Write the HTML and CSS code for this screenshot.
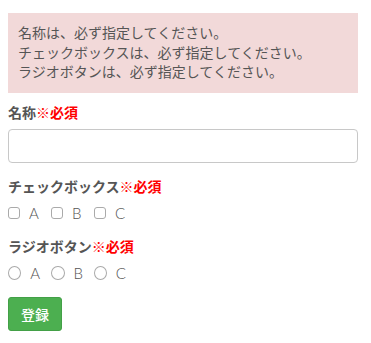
FILE: index.html
```html
<!DOCTYPE html>
<html lang="ja">
<head>
    <meta charset="UTF-8">
    <meta name="viewport" content="width=device-width, initial-scale=1.0">
    <title>入力フォーム</title>
    <link rel="stylesheet" href="styles.css">
</head>
<body>
    <div class="alert">
        名称は、必ず指定してください。<br>
        チェックボックスは、必ず指定してください。<br>
        ラジオボタンは、必ず指定してください。
    </div>

    <form class="form">
        <div class="form-group">
            <label class="form-label" for="name">名称<span class="required">※必須</span></label>
            <input type="text" id="name" class="form-control">
        </div>

        <div class="form-group">
            <div class="form-label">チェックボックス<span class="required">※必須</span></div>
            <div class="choices">
                <label class="choice"><input type="checkbox" class="check"> A</label>
                <label class="choice"><input type="checkbox" class="check"> B</label>
                <label class="choice"><input type="checkbox" class="check"> C</label>
            </div>
        </div>

        <div class="form-group">
            <div class="form-label">ラジオボタン<span class="required">※必須</span></div>
            <div class="choices">
                <label class="choice"><input type="radio" name="radio" class="radio"> A</label>
                <label class="choice"><input type="radio" name="radio" class="radio"> B</label>
                <label class="choice"><input type="radio" name="radio" class="radio"> C</label>
            </div>
        </div>

        <button type="button" class="btn-submit">登録</button>
    </form>
</body>
</html>
```

FILE: styles.css
```css
body {
    font-family: 'Lato', 'Noto Sans CJK JP', sans-serif;
    font-size: 14px;
    color: #555;
    background-color: #fff;
    margin: 0;
    padding: 13px 13px 0 8px;
}
.alert {
    background-color: #f2d9d9;
    padding: 10px 10px 11px 10px;
    line-height: 19.6px;
    margin-bottom: 10px;
}
.form-group {
    margin-bottom: 14px;
}
.form-label {
    display: block;
    font-weight: bold;
    line-height: 20px;
    margin-bottom: 6px;
}
.required {
    color: #f00;
}
.form-control {
    display: block;
    box-sizing: border-box;
    width: 100%;
    height: 34px;
    margin: 0;
    padding: 6px 10px;
    border: 1px solid #c8c8c8;
    border-radius: 4px;
    font-size: 14px;
}
.choices {
    display: flex;
    gap: 11px;
    height: 20px;
    align-items: center;
}
.choice {
    display: flex;
    align-items: center;
    gap: 9px;
    width: 32px;
    font-weight: 300;
    font-size: 15px;
    color: #555;
}
.check,
.radio {
    -webkit-appearance: none;
    appearance: none;
    margin: 0;
    width: 12px;
    height: 12px;
    border: 1px solid #aaa;
    background: #fff;
}
.check {
    border-radius: 3px;
}
.radio {
    width: 14px;
    height: 14px;
    border-radius: 50%;
}
.btn-submit {
    display: block;
    margin-top: 3px;
    width: 54px;
    height: 34px;
    background-color: #4caf50;
    color: #fff;
    border: 1px solid #43a047;
    border-radius: 3px;
    font-family: 'Noto Sans CJK JP', sans-serif;
    font-size: 14px;
    font-weight: 500;
    padding: 0;
}
```
